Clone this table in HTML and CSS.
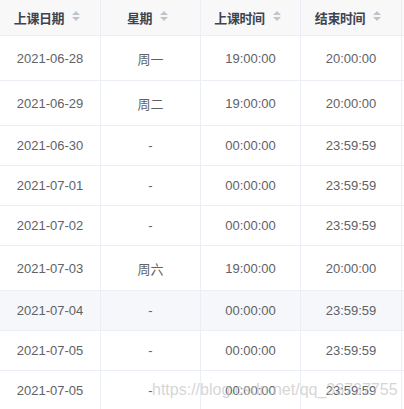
FILE: index.html
```html
<!DOCTYPE html>
<html lang="zh">
<head>
<meta charset="utf-8">
<link rel="stylesheet" href="styles.css">
</head>
<body>
<div class="table">
  <div class="row head">
    <div class="cell">上课日期<svg class="caret" width="8" height="10" viewBox="0 0 8 10"><path d="M4 0 L8 4 L0 4 Z"/><path d="M0 6 L8 6 L4 10 Z"/></svg></div>
    <div class="cell">星期<svg class="caret" width="8" height="10" viewBox="0 0 8 10"><path d="M4 0 L8 4 L0 4 Z"/><path d="M0 6 L8 6 L4 10 Z"/></svg></div>
    <div class="cell">上课时间<svg class="caret" width="8" height="10" viewBox="0 0 8 10"><path d="M4 0 L8 4 L0 4 Z"/><path d="M0 6 L8 6 L4 10 Z"/></svg></div>
    <div class="cell">结束时间<svg class="caret" width="8" height="10" viewBox="0 0 8 10"><path d="M4 0 L8 4 L0 4 Z"/><path d="M0 6 L8 6 L4 10 Z"/></svg></div>
  </div>
  <div class="row tall"><div class="cell">2021-06-28</div><div class="cell">周一</div><div class="cell">19:00:00</div><div class="cell">20:00:00</div></div>
  <div class="row tall"><div class="cell">2021-06-29</div><div class="cell">周二</div><div class="cell">19:00:00</div><div class="cell">20:00:00</div></div>
  <div class="row"><div class="cell">2021-06-30</div><div class="cell">-</div><div class="cell">00:00:00</div><div class="cell">23:59:59</div></div>
  <div class="row"><div class="cell">2021-07-01</div><div class="cell">-</div><div class="cell">00:00:00</div><div class="cell">23:59:59</div></div>
  <div class="row"><div class="cell">2021-07-02</div><div class="cell">-</div><div class="cell">00:00:00</div><div class="cell">23:59:59</div></div>
  <div class="row tall"><div class="cell">2021-07-03</div><div class="cell">周六</div><div class="cell">19:00:00</div><div class="cell">20:00:00</div></div>
  <div class="row hover"><div class="cell">2021-07-04</div><div class="cell">-</div><div class="cell">00:00:00</div><div class="cell">23:59:59</div></div>
  <div class="row"><div class="cell">2021-07-05</div><div class="cell">-</div><div class="cell">00:00:00</div><div class="cell">23:59:59</div></div>
  <div class="row"><div class="cell">2021-07-05</div><div class="cell">-</div><div class="cell">00:00:00</div><div class="cell">23:59:59</div></div>
</div>
<div class="watermark">https://blog.csdn.net/qq_33737755</div>
</body>
</html>
```
FILE: styles.css
```css
html, body {
  margin: 0;
  padding: 0;
  background: #fff;
  overflow: hidden;
}
body {
  width: 404px;
  height: 409px;
  position: relative;
  font-family: "Liberation Sans", "Noto Sans CJK SC", sans-serif;
  font-size: 13px;
  color: #606266;
}
.table {
  display: flex;
  flex-direction: column;
}
.row {
  display: grid;
  grid-template-columns: 101px 100px 100px 101px;
  height: 40px;
  border-bottom: 1px solid #ebeef5;
  box-sizing: border-box;
}
.row.tall {
  height: 45px;
}
.row.head {
  height: 36px;
  background: #f8f8f9;
  font-weight: bold;
  color: #3f444f;
}
.row.hover {
  background: #f5f7fa;
}
.cell {
  display: flex;
  align-items: center;
  justify-content: center;
  border-right: 1px solid #ebeef5;
  white-space: nowrap;
}
.head .cell {
  padding-right: 6px;
  padding-bottom: 1px;
  letter-spacing: -0.4px;
}
.caret {
  margin-left: 8px;
  fill: #c0c4cc;
  margin-top: -3px;
}
.watermark {
  position: absolute;
  left: 152px;
  top: 381px;
  font-family: "Liberation Sans", sans-serif;
  font-size: 16px;
  color: rgba(195, 195, 195, 0.7);
  white-space: nowrap;
}
```
